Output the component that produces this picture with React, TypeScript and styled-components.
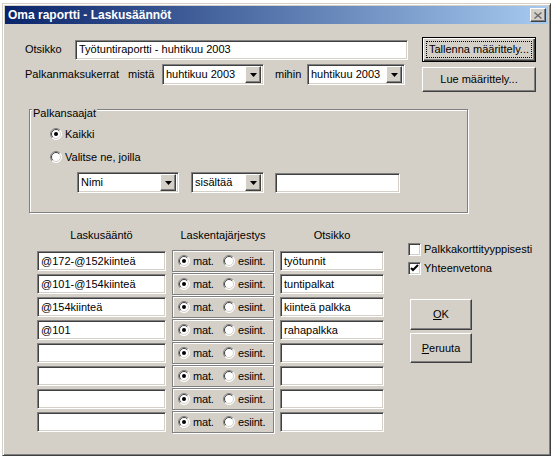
import { Fragment } from "react";
import styled, { createGlobalStyle, css } from "styled-components";

const FACE = "#d4d0c8";

const GlobalStyle = createGlobalStyle`
	html, body {
		margin: 0;
		padding: 0;
		background: #fff;
	}
	body {
		font-family: "Liberation Sans", Arial, sans-serif;
		font-size: 11px;
		line-height: 13px;
		color: #000;
	}
`;

const Window = styled.div`
	margin: 3px 0 0 2px;
	width: 549px;
	height: 453px;
	box-sizing: border-box;
	background: ${FACE};
	border: 1px solid;
	border-color: ${FACE} #404040 #404040 ${FACE};
	box-shadow: inset 1px 1px #fff, inset -1px -1px #808080;
	padding: 2px;
	display: flex;
	flex-direction: column;
`;

const TitleBar = styled.div`
	height: 18px;
	flex-shrink: 0;
	display: flex;
	align-items: center;
	justify-content: space-between;
	padding: 0 2px 0 3px;
	background: linear-gradient(to right, #0a246a, #a6caf0);
	color: #fff;
	font-weight: bold;
	font-size: 12px;
`;

const CloseButton = styled.div`
	width: 16px;
	height: 14px;
	box-sizing: border-box;
	background: ${FACE};
	border: 1px solid;
	border-color: #fff #404040 #404040 #fff;
	box-shadow: inset -1px -1px #808080;
	display: flex;
	align-items: center;
	justify-content: center;
`;

const Body = styled.div`
	display: flex;
	flex-direction: column;
`;

const TopSection = styled.div`
	display: flex;
	margin: 13px 0 0 20px;
`;

const Column = styled.div<{ $gap?: number }>`
	display: flex;
	flex-direction: column;
	gap: ${p => p.$gap ?? 0}px;
`;

const FormRow = styled.div`
	display: flex;
	align-items: center;
	height: 25px;
`;

const Label = styled.span<{ $w?: number; $ml?: number }>`
	width: ${p => (p.$w ? `${p.$w}px` : "auto")};
	margin-left: ${p => p.$ml ?? 0}px;
	flex-shrink: 0;
	white-space: nowrap;
`;

const sunken = css`
	box-sizing: border-box;
	background: #fff;
	border: 1px solid;
	border-color: #808080 #fff #fff #808080;
	box-shadow: inset 1px 1px #404040, inset -1px -1px ${FACE};
`;

const raised = css`
	box-sizing: border-box;
	background: ${FACE};
	border: 1px solid;
	border-color: #fff #404040 #404040 #fff;
	box-shadow: inset -1px -1px #808080, inset 1px 1px ${FACE};
`;

const Field = styled.div<{ $w: number; $ml?: number }>`
	${sunken};
	width: ${p => p.$w}px;
	height: 20px;
	margin-left: ${p => p.$ml ?? 0}px;
	flex-shrink: 0;
	padding: 0 3px;
	display: flex;
	align-items: center;
	white-space: nowrap;
	overflow: hidden;
`;

const ComboBox = styled.div<{ $w: number; $ml?: number }>`
	${sunken};
	width: ${p => p.$w}px;
	height: 21px;
	margin-left: ${p => p.$ml ?? 0}px;
	flex-shrink: 0;
	padding: 2px 2px 2px 3px;
	display: flex;
	align-items: center;
	justify-content: space-between;
	white-space: nowrap;
`;

const DropButton = styled.div`
	${raised};
	width: 16px;
	height: 17px;
	display: flex;
	align-items: center;
	justify-content: center;
`;

const Button = styled.div<{ $w: number; $h: number; $default?: boolean; $ml?: number }>`
	${raised};
	width: ${p => p.$w}px;
	height: ${p => p.$h}px;
	margin-left: ${p => p.$ml ?? 0}px;
	display: flex;
	align-items: center;
	justify-content: center;
	flex-shrink: 0;
	${p =>
		p.$default &&
		css`
			border-color: #000;
			box-shadow: inset 1px 1px #fff, inset -1px -1px #404040, inset -2px -2px #808080;
			padding: 3px;
		`}
`;

const FocusRing = styled.span`
	flex: 1;
	align-self: stretch;
	display: flex;
	align-items: center;
	justify-content: center;
	border: 1px dotted #000;
`;

const GroupBox = styled.div`
	position: relative;
	margin: 17px 0 0 24px;
	width: 439px;
	height: 104px;
	box-sizing: border-box;
	border: 1px solid #808080;
	box-shadow: inset 1px 1px #fff, 1px 1px #fff;
	padding: 16px 0 0 20px;
	display: flex;
	flex-direction: column;
	gap: 7px;
`;

const Legend = styled.span`
	position: absolute;
	top: -3px;
	left: 2px;
	padding: 0 1px;
	background: ${FACE};
`;

const OptionRow = styled.div<{ $ml?: number; $h?: number }>`
	display: flex;
	align-items: center;
	height: ${p => p.$h ?? 16}px;
	margin-left: ${p => p.$ml ?? 0}px;
`;

const Option = styled.span<{ $w?: number }>`
	display: flex;
	align-items: center;
	gap: 3px;
	width: ${p => (p.$w ? `${p.$w}px` : "auto")};
	flex-shrink: 0;
	white-space: nowrap;
`;

const BottomSection = styled.div`
	display: flex;
	margin: 16px 0 0 32px;
`;

const RuleTable = styled.div`
	display: grid;
	grid-template-columns: 129px 102px 104px;
	column-gap: 6px;
	row-gap: 1px;
	grid-auto-rows: 22px;
	grid-template-rows: 20px;
	align-items: center;
`;

const HeaderCell = styled.div`
	align-self: start;
	text-align: center;
`;

const OrderPanel = styled.div`
	height: 22px;
	box-sizing: border-box;
	border: 1px solid #808080;
	box-shadow: inset 1px 1px #fff, 1px 1px #fff;
	padding-left: 5px;
	display: flex;
	align-items: center;
	letter-spacing: -0.2px;
`;

const SideColumn = styled.div`
	margin: 12px 0 0 24px;
	display: flex;
	flex-direction: column;
`;

const CheckRow = styled.div`
	display: flex;
	align-items: center;
	gap: 3px;
	height: 17px;
	margin-bottom: 2px;
	white-space: nowrap;
`;

const ButtonStack = styled.div`
	margin: 20px 0 0 2px;
	display: flex;
	flex-direction: column;
	gap: 3px;
`;

const CheckBox = styled.div`
	${sunken};
	width: 13px;
	height: 13px;
	flex-shrink: 0;
	display: flex;
	align-items: center;
	justify-content: center;
`;

function Arrow() {
	return (
		<svg width="7" height="4" viewBox="0 0 7 4">
			<path d="M0 0h7L3.5 4z" fill="#000" />
		</svg>
	);
}

function Radio({ checked }: { checked?: boolean }) {
	return (
		<svg width="12" height="12" viewBox="0 0 12 12" style={{ flexShrink: 0 }}>
			<circle cx="6" cy="6" r="5.5" fill="#fff" />
			<path d="M2.1 9.9A5.5 5.5 0 0 1 9.9 2.1" fill="none" stroke="#808080" />
			<path d="M9.9 2.1A5.5 5.5 0 0 1 2.1 9.9" fill="none" stroke="#fff" />
			<path d="M2.8 9.2A4.5 4.5 0 0 1 9.2 2.8" fill="none" stroke="#404040" />
			<path d="M9.2 2.8A4.5 4.5 0 0 1 2.8 9.2" fill="none" stroke={FACE} />
			{checked && <circle cx="6" cy="6" r="2" fill="#000" />}
		</svg>
	);
}

function Check({ checked }: { checked?: boolean }) {
	return (
		<CheckBox>
			{checked && (
				<svg width="9" height="9" viewBox="0 0 9 9">
					<path d="M1 4l2 2 5-5" fill="none" stroke="#000" strokeWidth="2" />
				</svg>
			)}
		</CheckBox>
	);
}

function Combo({ w, ml, value }: { w: number; ml?: number; value: string }) {
	return (
		<ComboBox $w={w} $ml={ml}>
			<span>{value}</span>
			<DropButton>
				<Arrow />
			</DropButton>
		</ComboBox>
	);
}

const rules = [
	{ rule: "@172-@152kiinteä", title: "työtunnit" },
	{ rule: "@101-@154kiinteä", title: "tuntipalkat" },
	{ rule: "@154kiinteä", title: "kiinteä palkka" },
	{ rule: "@101", title: "rahapalkka" },
	{ rule: "", title: "" },
	{ rule: "", title: "" },
	{ rule: "", title: "" },
	{ rule: "", title: "" },
];

export default function App() {
	return (
		<>
			<GlobalStyle />
			<Window>
				<TitleBar>
					<span>Oma raportti - Laskusäännöt</span>
					<CloseButton>
						<svg width="8" height="7" viewBox="0 0 8 7">
							<path d="M0.5 0.5l7 6M7.5 0.5l-7 6" stroke="#6a6a6a" strokeWidth="1.4" />
						</svg>
					</CloseButton>
				</TitleBar>
				<Body>
					<TopSection>
						<Column>
							<FormRow>
								<Label $w={50}>Otsikko</Label>
								<Field $w={333}>Työtuntiraportti - huhtikuu 2003</Field>
							</FormRow>
							<FormRow>
								<Label $w={103}>Palkanmaksukerrat</Label>
								<Label $w={34}>mistä</Label>
								<Combo w={102} value="huhtikuu 2003" />
								<Label $w={32} $ml={11}>mihin</Label>
								<Combo w={98} value="huhtikuu 2003" />
							</FormRow>
						</Column>
						<Column $gap={5}>
							<Button $w={114} $h={25} $ml={14} $default>
								<FocusRing>Tallenna määrittely...</FocusRing>
							</Button>
							<Button $w={114} $h={25} $ml={14}>Lue määrittely...</Button>
						</Column>
					</TopSection>

					<GroupBox>
						<Legend>Palkansaajat</Legend>
						<OptionRow>
							<Option>
								<Radio checked />
								Kaikki
							</Option>
						</OptionRow>
						<OptionRow>
							<Option>
								<Radio />
								Valitse ne, joilla
							</Option>
						</OptionRow>
						<OptionRow $ml={27} $h={21}>
							<Combo w={102} value="Nimi" />
							<Combo w={73} ml={12} value="sisältää" />
							<Field $w={125} $ml={11} />
						</OptionRow>
					</GroupBox>

					<BottomSection>
						<RuleTable>
							<HeaderCell>Laskusääntö</HeaderCell>
							<HeaderCell>Laskentajärjestys</HeaderCell>
							<HeaderCell>Otsikko</HeaderCell>
							{rules.map((r, i) => (
								<Fragment key={i}>
									<Field $w={129}>{r.rule}</Field>
									<OrderPanel>
										<Option $w={45}>
											<Radio checked />
											mat.
										</Option>
										<Option>
											<Radio />
											esiint.
										</Option>
									</OrderPanel>
									<Field $w={104}>{r.title}</Field>
								</Fragment>
							))}
						</RuleTable>
						<SideColumn>
							<CheckRow>
								<Check />
								Palkkakorttityyppisesti
							</CheckRow>
							<CheckRow>
								<Check checked />
								Yhteenvetona
							</CheckRow>
							<ButtonStack>
								<Button $w={62} $h={31}>
									<span><u>O</u>K</span>
								</Button>
								<Button $w={62} $h={30}>
									<span><u>P</u>eruuta</span>
								</Button>
							</ButtonStack>
						</SideColumn>
					</BottomSection>
				</Body>
			</Window>
		</>
	);
}
